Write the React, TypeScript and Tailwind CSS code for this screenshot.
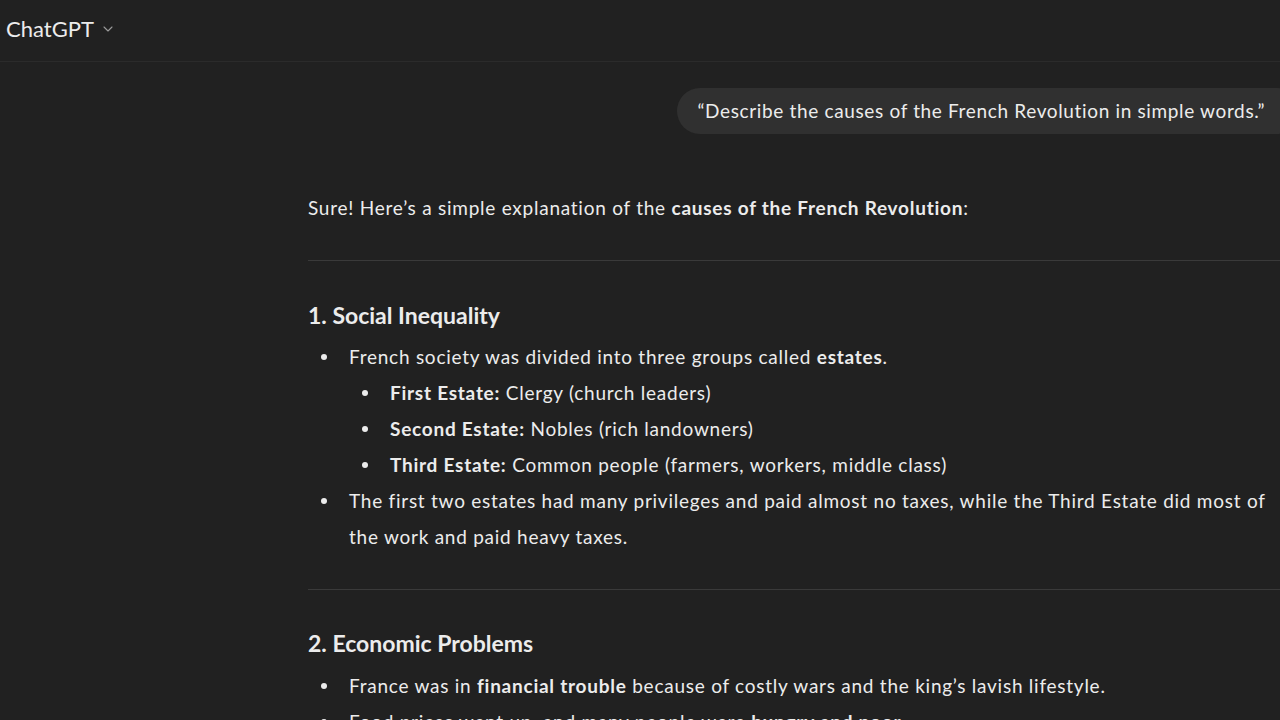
import React from "react";

const font = { fontFamily: "Lato, 'Noto Sans', sans-serif" };

const Bullet = ({ nested = false, children }: { nested?: boolean; children: React.ReactNode }) => (
  <li className={`flex ${nested ? "pl-[56px]" : "pl-[15px]"}`}>
    <span className="w-[26px] shrink-0 flex items-center h-[36px]">
      <span className="w-[6px] h-[6px] rounded-full bg-[#ececec] ml-[-2px]" />
    </span>
    <span className="flex-1">{children}</span>
  </li>
);

const App = () => {
  return (
    <div className="w-[1280px] h-[720px] overflow-hidden bg-[#212121] text-[#ececec]" style={font}>
      {/* header */}
      <header className="h-[62px] flex items-center px-[6px] border-b border-[#2b2b2b]">
        <span className="text-[22px] text-[#ececec] -mt-[5px]">ChatGPT</span>
        <svg width="16" height="16" viewBox="0 0 24 24" className="ml-[6px] -mt-[3px]" fill="none" stroke="#9b9b9b" strokeWidth="1.6" strokeLinecap="round" strokeLinejoin="round">
          <path d="M6 9l6 6 6-6" />
        </svg>
      </header>

      <main className="pl-[308px] w-[1300px] text-[19px] tracking-[0.75px]">
        <div className="flex justify-end pt-[26px]">
          <div className="bg-[#303030] rounded-full h-[46px] flex items-center pl-[20px] pr-[35px] text-[19px] tracking-[0.65px]">
            “Describe the causes of the French Revolution in simple words.”
          </div>
        </div>

        <p className="mt-[60px] leading-[28px]">
          Sure! Here’s a simple explanation of the <b className="font-bold">causes of the French Revolution</b>:
        </p>

        <hr className="mt-[38px] border-t border-[#3a3a3a]" />

        <h3 className="mt-[39px] text-[23px] font-bold leading-[30px] tracking-normal">1. Social Inequality</h3>
        <ul className="mt-[9px] leading-[36px]">
          <Bullet>
            French society was divided into three groups called <b>estates</b>.
          </Bullet>
          <Bullet nested>
            <b>First Estate:</b> Clergy (church leaders)
          </Bullet>
          <Bullet nested>
            <b>Second Estate:</b> Nobles (rich landowners)
          </Bullet>
          <Bullet nested>
            <b>Third Estate:</b> Common people (farmers, workers, middle class)
          </Bullet>
          <Bullet>
            <span className="block w-[925px]">
              The first two estates had many privileges and paid almost no taxes, while the Third Estate did most of the work and paid heavy taxes.
            </span>
          </Bullet>
        </ul>

        <hr className="mt-[34px] border-t border-[#3a3a3a]" />

        <h3 className="mt-[38px] text-[23px] font-bold leading-[30px] tracking-normal">2. Economic Problems</h3>
        <ul className="mt-[10px] leading-[36px]">
          <Bullet>
            France was in <b>financial trouble</b> because of costly wars and the king’s lavish lifestyle.
          </Bullet>
          <Bullet>
            Food prices went up, and many people were <b>hungry and poor</b>.
          </Bullet>
        </ul>
      </main>
    </div>
  );
};

export default App;
